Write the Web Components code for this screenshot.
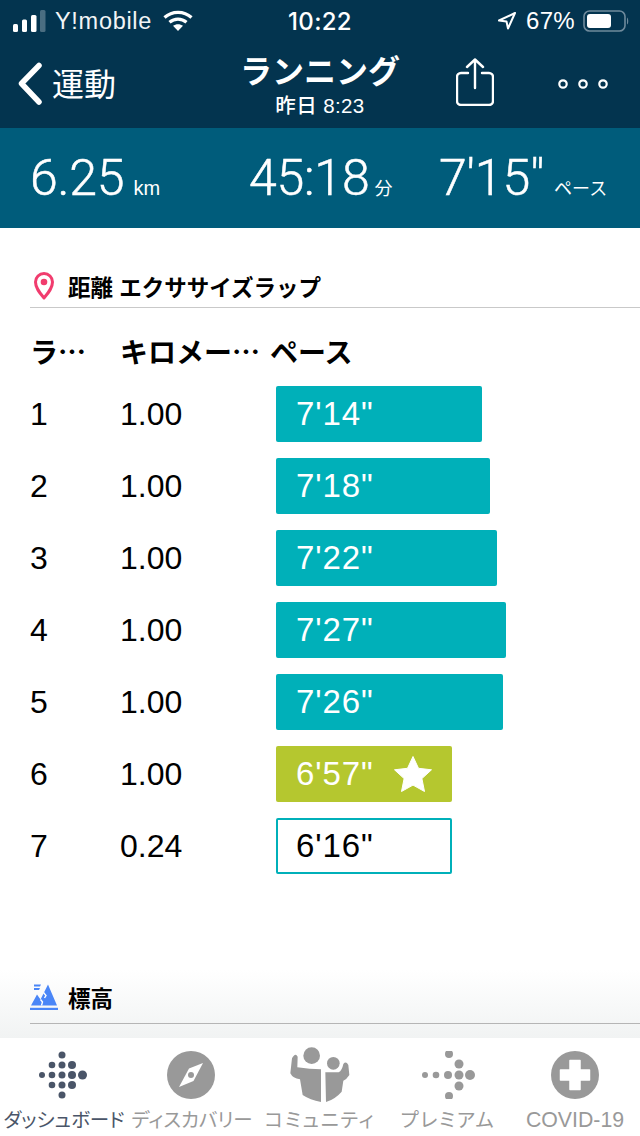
<!DOCTYPE html>
<html lang="ja"><head><meta charset="utf-8">
<style>
html,body{margin:0;padding:0;background:#fff}
body{width:640px;height:1136px;display:flex;flex-direction:column;overflow:hidden;font-family:"Liberation Sans","Noto Sans CJK JP",sans-serif}
</style></head><body>
<app-header></app-header>
<stats-band>
  <stat-item value="6.25" unit="km" width="219" size="20" gap="9"></stat-item>
  <stat-item value="45:18" unit="分" width="190" size="18" gap="5"></stat-item>
  <stat-item value="7'15&quot;" unit="ペース" size="18" gap="10"></stat-item>
</stats-band>
<lap-panel>
  <lap-row lap="1" km="1.00" pace="7'14&quot;" w="206"></lap-row>
  <lap-row lap="2" km="1.00" pace="7'18&quot;" w="214"></lap-row>
  <lap-row lap="3" km="1.00" pace="7'22&quot;" w="221"></lap-row>
  <lap-row lap="4" km="1.00" pace="7'27&quot;" w="230"></lap-row>
  <lap-row lap="5" km="1.00" pace="7'26&quot;" w="227"></lap-row>
  <lap-row lap="6" km="1.00" pace="6'57&quot;" w="176" kind="best"></lap-row>
  <lap-row lap="7" km="0.24" pace="6'16&quot;" w="176" kind="partial"></lap-row>
</lap-panel>
<tab-bar></tab-bar>
<script>
const JP='"Liberation Sans","Noto Sans CJK JP",sans-serif';
function def(name,html){
  customElements.define(name,class extends HTMLElement{
    connectedCallback(){
      if(this.shadowRoot)return;
      const r=this.attachShadow({mode:'open'});
      r.innerHTML=typeof html==='function'?html(this):html;
    }
  });
}
def('app-header',`<style>
:host{display:block;background:#03344f;color:#fff;height:128px;flex:none;font-family:${JP}}
.status{height:40px;box-sizing:border-box;padding:2px 11px 0 13px;display:grid;grid-template-columns:1fr auto 1fr;align-items:center}
.l,.r{display:flex;align-items:center}
.r{justify-content:flex-end}
.carrier{font:400 23.5px "Liberation Sans",sans-serif;margin:0 11px 0 8px;letter-spacing:.7px;opacity:.95}
.time{font:500 24px Inter,sans-serif;letter-spacing:.3px;margin-left:-2px}
.batt{font:400 24px "Liberation Sans",sans-serif;margin:0 8px 0 9px;letter-spacing:.3px}
.nav{height:88px;display:grid;grid-template-columns:1fr auto 1fr;align-items:center;padding:0 0 0 18px}
.back{display:flex;align-items:center;gap:10px;font-size:32px;font-weight:400}
.back span{position:relative;top:-2px}
.title{text-align:center;margin:3px 0 0 -18px}
.t1{font-size:32px;font-weight:700;line-height:38px}
.t2{font-size:20.500px;font-weight:500;line-height:24px;margin-top:3px;letter-spacing:.4px}
.acts{display:flex;justify-content:flex-end;align-items:center;padding-right:32px;gap:64px}
.share{margin-top:-5px}
svg{display:block}
</style>
<div class="status">
 <div class="l">
  <svg width="34" height="22" viewBox="0 0 34 22"><rect x="0" y="14" width="5" height="8" rx="1.5" fill="#fff"/><rect x="9" y="9.500" width="5" height="12.500" rx="1.500" fill="#fff"/><rect x="18" y="5" width="5.500" height="17" rx="1.500" fill="#fff"/><rect x="27" y="0" width="5.500" height="22" rx="1.500" fill="#4a6d81"/></svg>
  <span class="carrier">Y!mobile</span>
  <svg width="30" height="22" viewBox="0 0 30 22" fill="none" stroke="#fff" stroke-width="3.200"><path d="M1.500 7.500C9 .6 21 .6 28.500 7.500"/><path d="M6.500 12.300C11.500 8 18.500 8 23.500 12.300"/><path d="M15 21l-5-5.200c2.900-2.200 7.100-2.200 10 0z" fill="#fff" stroke="none"/></svg>
 </div>
 <div class="time">10:22</div>
 <div class="r">
  <svg width="20" height="18" viewBox="0 0 20 18" fill="none" stroke="#fff" stroke-width="2" stroke-linejoin="round"><path d="M18 1L2 8.500l7.500 1 1.500 7z"/></svg>
  <span class="batt">67%</span>
  <svg width="46" height="22" viewBox="0 0 46 22"><rect x="1" y="1" width="41" height="20" rx="5.500" fill="none" stroke="#6f8a9c" stroke-width="1.600"/><rect x="4" y="4" width="24" height="14" rx="3" fill="#fff"/><path d="M44 7.500c1.500.5 1.800 6.500 0 7z" fill="#6f8a9c"/></svg>
 </div>
</div>
<div class="nav">
 <div class="back">
  <svg width="24" height="44" viewBox="0 0 24 44" fill="none" stroke="#fff" stroke-width="5.500" stroke-linecap="round" stroke-linejoin="round"><path d="M21 3.500L3.500 21.500 21 40"/></svg>
  <span>運動</span>
 </div>
 <div class="title"><div class="t1">ランニング</div><div class="t2">昨日 8:23</div></div>
 <div class="acts">
  <svg class="share" width="38" height="48" viewBox="0 0 38 48" fill="none" stroke="#fff" stroke-width="2.400" stroke-linecap="round" stroke-linejoin="round"><path d="M12 15H5a4 4 0 0 0-4 4v24a4 4 0 0 0 4 4h28a4 4 0 0 0 4-4V19a4 4 0 0 0-4-4h-7"/><path d="M19 30V2M11 9l8-7.500L27 9"/></svg>
  <svg width="50" height="12" viewBox="0 0 50 12" fill="none" stroke="#fff" stroke-width="2.200"><circle cx="5" cy="6" r="3.700"/><circle cx="25" cy="6" r="3.700"/><circle cx="45" cy="6" r="3.700"/></svg>
 </div>
</div>`);
def('stats-band',`<style>:host{display:flex;align-items:center;height:100px;background:#005c7b;color:#fff;padding-left:30px;flex:none}</style><slot></slot>`);
def('stat-item',el=>`<style>
:host{display:flex;align-items:baseline;${el.getAttribute('width')?`width:${el.getAttribute('width')}px;`:''}}
.v{font:300 50px Roboto,sans-serif;letter-spacing:-.2px;line-height:56px;-webkit-text-stroke:.5px #fff}
.u{font:400 ${el.getAttribute('size')}px ${JP};margin-left:${el.getAttribute('gap')}px}
</style><span class="v">${el.getAttribute('value').replace(/"/g,'&quot;')}</span><span class="u">${el.getAttribute('unit')}</span>`);
def('lap-panel',`<style>
:host{display:flex;flex-direction:column;flex:1;min-height:0;position:relative;overflow:hidden;font-family:${JP};color:#000}
.sec{display:flex;align-items:center;margin-left:30px;font-weight:700;font-size:22.5px;border-bottom:1px solid #c9c9c9;position:relative;z-index:1;flex:none;box-sizing:border-box}
.s1{margin-top:44px;height:36px;padding:0 0 7px 4px;gap:14px}
.s2{height:41px;padding-bottom:13px;gap:10px;border-color:#b5b5b5}
.hd{display:flex;margin:25px 0 0 30px;height:36px;align-items:center;font:700 28px "Noto Sans CJK JP",sans-serif;flex:none}
.hd span:nth-child(1){width:90px}.hd span:nth-child(2){width:150px}
.rows{margin-top:17px;display:flex;flex-direction:column;gap:16px;flex:none}
.gap{height:109px;flex:none}
.fade{position:absolute;left:0;right:0;bottom:0;height:68px;background:linear-gradient(rgba(241,243,243,0),#f1f3f3);z-index:0}
svg{display:block;flex:none}
</style>
<div class="fade"></div>
<div class="sec s1">
 <svg width="20" height="28" viewBox="0 0 20 28"><path d="M10 26C5.500 20.500 1.500 16 1.500 10a8.500 8.500 0 0 1 17 0C18.500 16 14.500 20.500 10 26z" fill="none" stroke="#f13c6e" stroke-width="3" stroke-linejoin="round"/><circle cx="10" cy="10" r="3.300" fill="#f13c6e"/></svg>
 <span>距離 エクササイズラップ</span>
</div>
<div class="hd"><span>ラ…</span><span>キロメー…</span><span>ペース</span></div>
<div class="rows"><slot></slot></div>
<div class="gap"></div>
<div class="sec s2">
 <svg width="28" height="27" viewBox="0 0 28 27" fill="#4a86f7"><path d="M1 22.500L7 11.500l3.500 5L18 1.500l9 21z"/><path d="M10.500 16.500l2 2.500-1 3.500" fill="none" stroke="#fff" stroke-width="1.400"/><path d="M13.500 9.500l2.500 3-1.500 2.500" fill="none" stroke="#fff" stroke-width="1.400"/><path d="M4 1.500h7l-1 2H4zM4 5h6l-1 2H4z"/><path d="M0 24.800h28V27H0z"/></svg>
 <span>標高</span>
</div>`);
def('lap-row',el=>{
 const k=el.getAttribute('kind')||'';
 const bg=k==='best'?'#b5c72f':k==='partial'?'#fff':'#00b0b9';
 const fg=k==='partial'?'#000':'#fff';
 const bd=k==='partial'?'border:2px solid #00b0b9;':'';
 return `<style>
:host{display:flex;align-items:center;height:56px;margin-left:30px;font:400 32px "Liberation Sans",sans-serif;color:#000}
.a{width:90px}.b{width:156px}
.bar{box-sizing:border-box;width:${el.getAttribute('w')}px;height:56px;background:${bg};color:${fg};${bd}border-radius:2px;display:flex;align-items:center;padding-left:${k==='partial'?18:20}px;gap:19px;font-size:33px;letter-spacing:.9px}
</style><span class="a">${el.getAttribute('lap')}</span><span class="b">${el.getAttribute('km')}</span>
<div class="bar"><span>${el.getAttribute('pace').replace(/"/g,'&quot;')}</span>${k==='best'?'<svg width="40" height="40" viewBox="0 0 40 38"><path d="M20 1.500l5.500 11.800 13 1.500-9.600 8.800 2.600 12.900L20 30.100 8.500 36.500l2.600-12.900L1.500 14.800l13-1.500z" fill="#fff" stroke="#fff" stroke-linejoin="round"/></svg>':''}</div>`;
});
const dots=a=>a.map(([x,y,r])=>`<circle cx="${x}" cy="${y}" r="${r}"/>`).join('');
const logo=dots([[7,24,3],[17,14,3.300],[17,24,3.300],[17,34,3.300],[27,4,3.500],[27,14,3.500],[27,24,3.500],[27,34,3.500],[27,44,3.500],[37,14,4],[37,24,4],[37,34,4],[47.500,24,4.500]]);
const prem=dots([[3,24,3],[14,24,3.300],[26,24,4],[37,24,4.500],[48,24,5],[27,3,4],[37,13,4.500],[37,35,4.500],[27,45,4]]);
def('tab-bar',`<style>
:host{display:grid;grid-template-columns:repeat(5,128px);height:98px;background:#fff;flex:none;font-family:${JP};position:relative;z-index:2}
.t{display:flex;flex-direction:column;align-items:center;padding-top:13px;color:#999;font-size:19.500px;font-feature-settings:"palt";white-space:nowrap}
.t.on{color:#4a5568}
.t span{line-height:24px;margin-top:9px}
.wide span{letter-spacing:1.700px}
.cov{font-size:21.300px}
.cov span{margin-left:-2px}
.shift svg{margin-left:-2px}
svg{display:block;fill:currentColor}
</style>
<div class="t on"><svg width="52" height="48" viewBox="3 0 52 48">${logo}</svg><span>ダッシュボード</span></div>
<div class="t shift"><svg width="48" height="48" viewBox="0 0 48 48"><circle cx="24" cy="24" r="24"/><path d="M36 12L22 17.500 12 36l14.500-6z" fill="#fff"/><circle cx="24" cy="24" r="3"/></svg><span>ディスカバリー</span></div>
<div class="t wide"><svg width="80" height="70" viewBox="0 0 240 210" style="margin:-11px 0"><circle cx="95" cy="47" r="25"/><circle cx="160" cy="70" r="19"/><path d="M36 55Q46 36 53 50L52 82Q90 88 123 88V186Q90 180 68 165L60 118Q38 115 31 100z"/><path d="M136 97H176Q186 92 190 72Q198 62 205 75L208 105Q200 118 190 122L185 155Q165 178 138 186z"/></svg><span>コミュニティ</span></div>
<div class="t wide"><svg width="53" height="48" viewBox="0 0 53 48">${prem}</svg><span>プレミアム</span></div>
<div class="t shift cov"><svg width="48" height="48" viewBox="0 0 48 48"><circle cx="24" cy="24" r="24"/><path d="M19 9.500h10v9.500h9.500v10H29v9.500H19V29H9.500V19H19z" fill="#fff" stroke="#fff" stroke-width="1.500" stroke-linejoin="round"/></svg><span>COVID-19</span></div>`);
</script>
</body></html>
